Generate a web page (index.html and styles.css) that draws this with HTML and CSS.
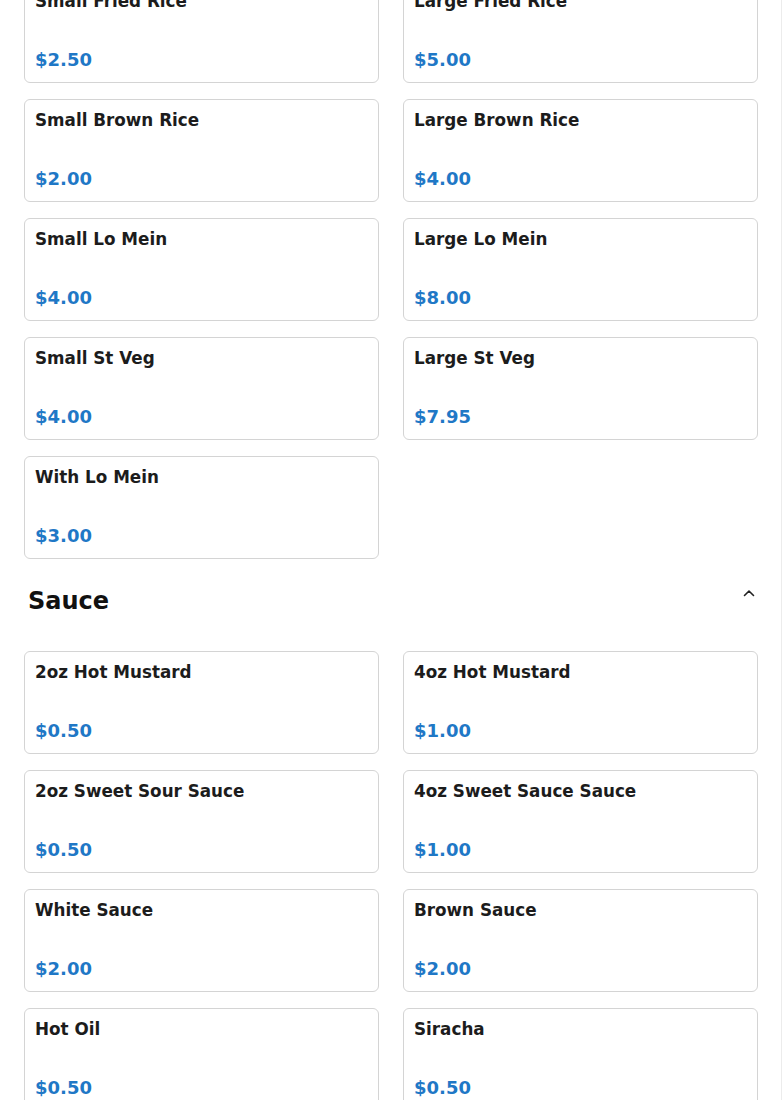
FILE: index.html
```html
<!DOCTYPE html>
<html lang="en">
<head>
<meta charset="utf-8">
<title>Menu</title>
<link rel="stylesheet" href="styles.css">
</head>
<body>
<div class="page">
  <section class="section section-first">
    <div class="grid">
      <div class="card"><div class="name">Small Fried Rice</div><div class="price">$2.50</div></div>
      <div class="card"><div class="name">Large Fried Rice</div><div class="price">$5.00</div></div>
      <div class="card"><div class="name">Small Brown Rice</div><div class="price">$2.00</div></div>
      <div class="card"><div class="name">Large Brown Rice</div><div class="price">$4.00</div></div>
      <div class="card"><div class="name">Small Lo Mein</div><div class="price">$4.00</div></div>
      <div class="card"><div class="name">Large Lo Mein</div><div class="price">$8.00</div></div>
      <div class="card"><div class="name">Small St Veg</div><div class="price">$4.00</div></div>
      <div class="card"><div class="name">Large St Veg</div><div class="price">$7.95</div></div>
      <div class="card"><div class="name">With Lo Mein</div><div class="price">$3.00</div></div>
    </div>
  </section>
  <section class="section">
    <div class="section-head">
      <h2 class="section-title">Sauce</h2>
      <svg class="chevron" width="12" height="8" viewBox="0 0 12 8" aria-hidden="true"><polyline points="1.5,6.5 6,2 10.5,6.5" fill="none" stroke="#222" stroke-width="1.6" stroke-linecap="round" stroke-linejoin="round"/></svg>
    </div>
    <div class="grid">
      <div class="card"><div class="name">2oz Hot Mustard</div><div class="price">$0.50</div></div>
      <div class="card"><div class="name">4oz Hot Mustard</div><div class="price">$1.00</div></div>
      <div class="card"><div class="name">2oz Sweet Sour Sauce</div><div class="price">$0.50</div></div>
      <div class="card"><div class="name">4oz Sweet Sauce Sauce</div><div class="price">$1.00</div></div>
      <div class="card"><div class="name">White Sauce</div><div class="price">$2.00</div></div>
      <div class="card"><div class="name">Brown Sauce</div><div class="price">$2.00</div></div>
      <div class="card"><div class="name">Hot Oil</div><div class="price">$0.50</div></div>
      <div class="card"><div class="name">Siracha</div><div class="price">$0.50</div></div>
    </div>
  </section>
</div>
</body>
</html>
```
FILE: styles.css
```css
html, body {
  margin: 0;
  padding: 0;
  background: #ffffff;
}
body {
  font-family: "DejaVu Sans", sans-serif;
  color: #1c1c1c;
  overflow: hidden;
}
.page {
  width: 782px;
  min-height: 1100px;
  box-shadow: inset -1px 0 0 #ececec;
  padding: 0 24px;
  box-sizing: border-box;
}
.section-first {
  margin-top: -20px;
}
.grid {
  display: grid;
  grid-template-columns: 1fr 1fr;
  column-gap: 24px;
  row-gap: 16px;
}
.card {
  border: 1px solid #d4d4d4;
  border-radius: 6px;
  background: #fff;
  padding: 10px 10px 12px;
}
.name {
  font-size: 16.8px;
  line-height: 20px;
  font-weight: bold;
  color: #1c1c1c;
  margin-bottom: 38px;
}
.price {
  font-size: 18px;
  line-height: 21px;
  font-weight: bold;
  color: #1f78c6;
}
.section-head {
  display: flex;
  align-items: center;
  justify-content: space-between;
  margin: 28px 0 36px;
  padding: 0 3px 0 4px;
}
.section-title {
  margin: 0;
  font-size: 24px;
  line-height: 28px;
  font-weight: bold;
  color: #111;
}
.chevron {
  display: block;
  margin-bottom: 16px;
}
```
